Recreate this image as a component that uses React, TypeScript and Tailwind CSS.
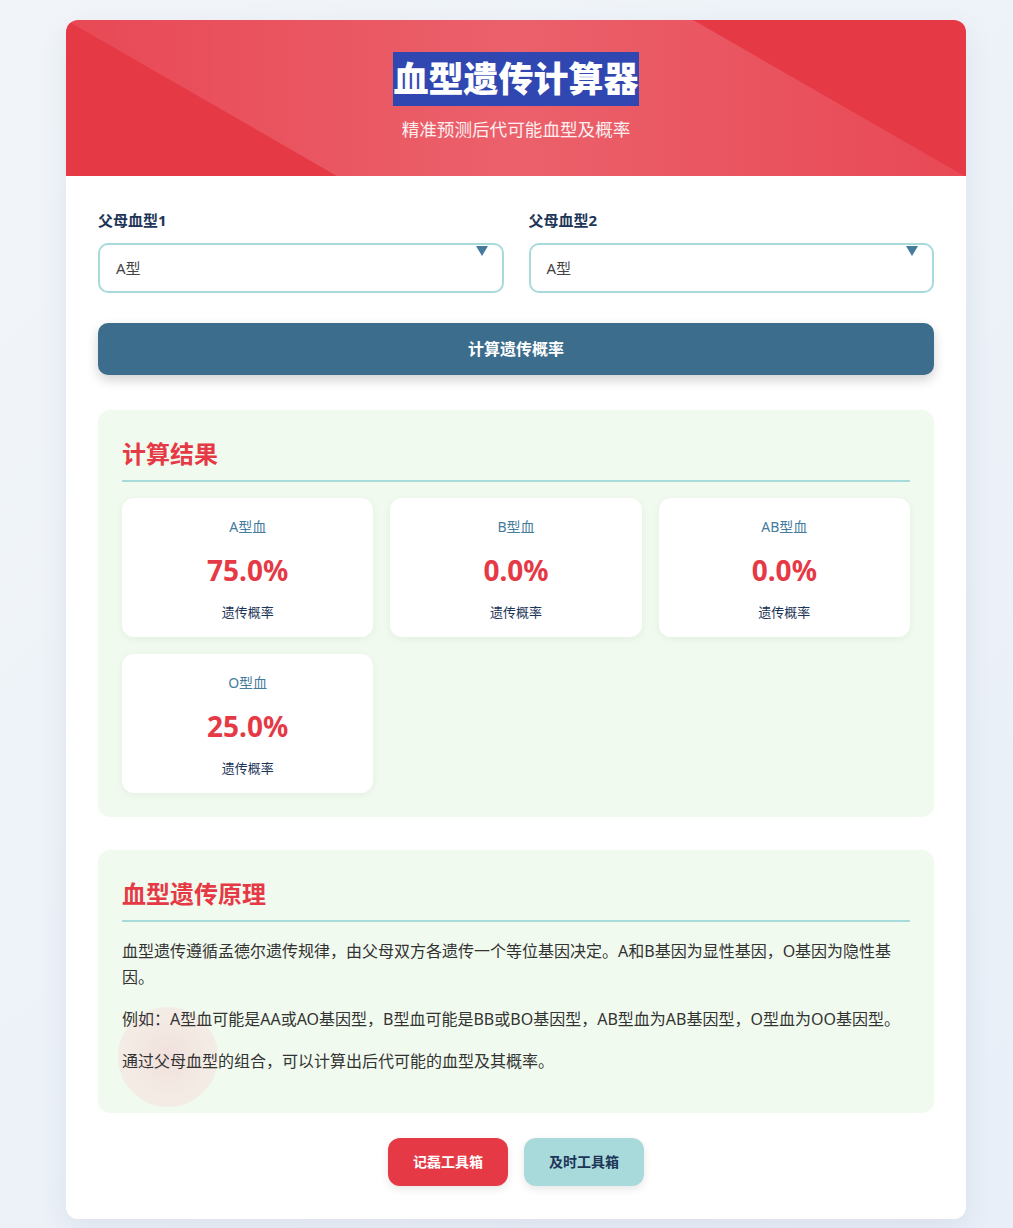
import React from "react";

const results = [
  { type: "A型血", pct: "75.0%" },
  { type: "B型血", pct: "0.0%" },
  { type: "AB型血", pct: "0.0%" },
  { type: "O型血", pct: "25.0%" },
];

function FakeSelect({ label, value }: { label: string; value: string }) {
  return (
    <div className="flex flex-col">
      <div className="text-[15px] font-bold text-[#1d3557] leading-[24px] mb-[11px]">{label}</div>
      <div className="relative h-[50px] rounded-[10px] border-2 border-[#a8dadc] bg-white flex items-center px-[16px]">
        <span className="text-[15px] text-[#444]">{value}</span>
        <span className="absolute right-[14px] top-[1px] w-0 h-0 border-l-[6px] border-r-[6px] border-t-[10px] border-l-transparent border-r-transparent border-t-[#457b9d]" />
      </div>
    </div>
  );
}

export default function App() {
  return (
    <div className="min-h-[1228px] w-full bg-[linear-gradient(135deg,#f1f5f9_0%,#e9eff8_100%)] pt-[20px] pb-[10px] font-['Noto_Sans','Noto_Sans_CJK_SC',sans-serif]">
      <div className="ml-[66px] w-[900px] bg-white rounded-[12px] overflow-hidden shadow-[0_10px_30px_rgba(30,50,90,0.08)]">
        {/* Header */}
        <div className="relative bg-[#e63946] h-[156px] overflow-hidden flex flex-col items-center pt-[32px]">
          <svg className="absolute inset-0 w-full h-full" viewBox="0 0 900 156" preserveAspectRatio="none">
            <defs>
              <linearGradient id="band" x1="0" y1="0" x2="1" y2="0">
                <stop offset="0" stopColor="#ffffff" stopOpacity="0.08" />
                <stop offset="0.5" stopColor="#ffffff" stopOpacity="0.2" />
                <stop offset="1" stopColor="#ffffff" stopOpacity="0.08" />
              </linearGradient>
            </defs>
            <polygon points="0,0 627,0 900,157 271,156" fill="url(#band)" />
          </svg>
          <h1 className="relative text-[35px] font-extrabold leading-[54px] h-[54px] text-white">
            <span className="inline-block bg-[#3047b1] leading-[54px]">血型遗传计算器</span>
          </h1>
          <p className="relative mt-[10px] text-[17.6px] leading-[27px] text-white/90">精准预测后代可能血型及概率</p>
        </div>

        {/* Body */}
        <div className="px-[32px] pt-[32px] pb-[33px]">
          <div className="grid grid-cols-2 gap-[25px]">
            <FakeSelect label="父母血型1" value="A型" />
            <FakeSelect label="父母血型2" value="A型" />
          </div>

          <button className="mt-[30px] w-full h-[52px] rounded-[10px] bg-[#3c6d8c] text-white text-[16px] font-bold shadow-[0_5px_12px_rgba(0,0,0,0.18)]">
            计算遗传概率
          </button>

          {/* Results */}
          <div className="mt-[35px] rounded-[12px] bg-[#f1faee] p-[24px]">
            <h2 className="text-[24px] font-bold leading-[40px] text-[#e63946] pb-[6px] border-b-2 border-[#a8dadc]">计算结果</h2>
            <div className="mt-[16px] grid grid-cols-3 gap-x-[17px] gap-y-[17px]">
              {results.map((r) => (
                <div key={r.type} className="h-[139px] rounded-[12px] bg-white shadow-[0_2px_8px_rgba(0,0,0,0.05)] flex flex-col items-center pt-[18px]">
                  <div className="text-[14px] leading-[21px] text-[#457b9d]">{r.type}</div>
                  <div className="mt-[12px] text-[28px] font-bold leading-[42px] text-[#e63946]">{r.pct}</div>
                  <div className="mt-[11px] text-[13px] leading-[20px] text-[#1d3557]">遗传概率</div>
                </div>
              ))}
            </div>
          </div>

          {/* Principle */}
          <div className="relative mt-[33px] rounded-[12px] bg-[#f1faee] px-[24px] pt-[24px] pb-[22px] overflow-hidden">
            <div className="absolute left-[20px] top-[157px] w-[100px] h-[100px] rounded-full bg-[radial-gradient(circle,#f1e0dd_0%,#f3e9e3_45%,#f3eee6_80%,rgba(243,240,232,0.6)_100%)]" />
            <h2 className="relative text-[24px] font-bold leading-[40px] text-[#e63946] pb-[6px] border-b-2 border-[#a8dadc]">血型遗传原理</h2>
            <div className="relative mt-[17px] text-[16px] leading-[25.6px] text-[#333]">
              <p className="mb-[16.4px]">血型遗传遵循孟德尔遗传规律，由父母双方各遗传一个等位基因决定。A和B基因为显性基因，O基因为隐性基因。</p>
              <p className="mb-[16.4px]">例如：A型血可能是AA或AO基因型，B型血可能是BB或BO基因型，AB型血为AB基因型，O型血为OO基因型。</p>
              <p className="mb-[16.4px]">通过父母血型的组合，可以计算出后代可能的血型及其概率。</p>
            </div>
          </div>

          {/* Footer buttons */}
          <div className="mt-[25px] flex justify-center gap-[16px]">
            <button className="w-[120px] h-[48px] rounded-[12px] bg-[#e63946] text-white text-[14px] font-bold shadow-[0_3px_8px_rgba(0,0,0,0.1)]">记磊工具箱</button>
            <button className="w-[120px] h-[48px] rounded-[12px] bg-[#a8dadc] text-[#1d3557] text-[14px] font-bold shadow-[0_3px_8px_rgba(0,0,0,0.1)]">及时工具箱</button>
          </div>
        </div>
      </div>
    </div>
  );
}
